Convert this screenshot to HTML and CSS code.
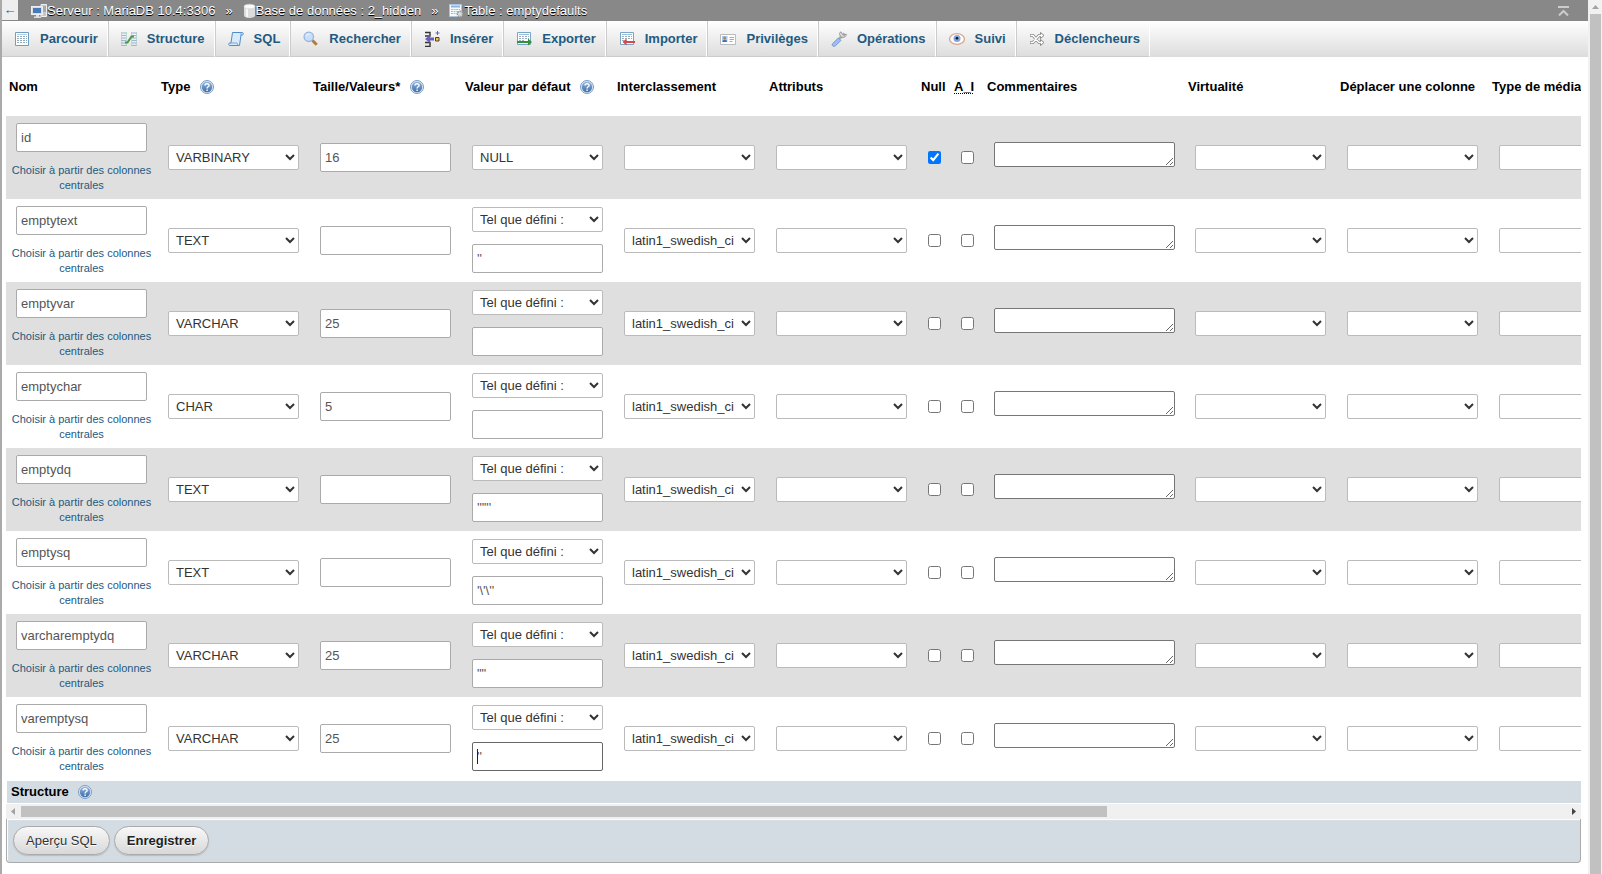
FILE: index.html
```html
<!DOCTYPE html>
<html lang="fr">
<head>
<meta charset="utf-8">
<title>Table : emptydefaults</title>
<link rel="stylesheet" href="styles.css">
</head>
<body>
<svg class="defs" aria-hidden="true">
  <defs>
    <linearGradient id="ball" x1="0" y1="0" x2="0" y2="1"><stop offset="0" stop-color="#8fb4de"/><stop offset="1" stop-color="#3f6ea8"/></linearGradient>
    <symbol id="help" viewBox="0 0 14 14">
      <circle cx="7" cy="7" r="6.5" fill="#dfe8f3" stroke="#7b9cc4"/>
      <circle cx="7" cy="7" r="5.2" fill="url(#ball)"/>
      <path d="M5 5.6C5 3.2 9.1 3.2 9.1 5.4 9.1 6.9 7.1 6.7 7.1 8.4M7.1 9.6v1.3" fill="none" stroke="#fff" stroke-width="1.4"/>
    </symbol>
  </defs>
</svg>
<div class="app">
  <div class="page">
    <header class="topbar">
      <button class="collapse" type="button" aria-label="Masquer le panneau">←</button>
      <nav class="crumbs" aria-label="Fil d'Ariane">
        <a href="#"><svg viewBox="0 0 16 16"><path d="M10 1.500h5.500v12H10z" fill="#c8c8c8" stroke="#eee"/><path d="M11 4h4M11 6h4M11 8h4" stroke="#888"/><rect x=".5" y="3.500" width="11" height="8" fill="#ddd" stroke="#eee"/><path d="M2 5h8v5H2z" fill="#4779bd"/><path d="M5 12h3v1.500h2V15H3v-1.500h2z" fill="#ddd"/></svg>Serveur : MariaDB 10.4:3306</a>
        <span class="sep">»</span>
        <a href="#"><svg class="db" viewBox="0 0 13 16"><path d="M1 3.500v9c0 3.300 11 3.300 11 0v-9z" fill="#dcdcdc"/><path d="M3 4v9.700l2 .7V4z" fill="#f7f7f7"/><ellipse cx="6.500" cy="3.500" rx="5.500" ry="2.300" fill="#fafafa" stroke="#ccc" stroke-width=".6"/></svg>Base de données : 2_hidden</a>
        <span class="sep">»</span>
        <a href="#"><svg viewBox="0 0 16 16"><path d="M1.500 1.500h12v12h-12z" fill="#f4f9fd" stroke="#a9c4dc"/><path d="M3 3.500h9" stroke="#8db4d6" stroke-width="2"/><path d="M3 6.500h9M3 8.500h9M3 10.500h9" stroke="#a9bccb" stroke-dasharray="2 .6"/><circle cx="12" cy="11" r="2.600" fill="#ddd" stroke="#999" stroke-width="1.600" stroke-dasharray="1.500 .8"/></svg>Table : emptydefaults</a>
      </nav>
      <a class="totop" href="#" aria-label="Haut de page"><svg viewBox="0 0 11 10"><path d="M0 1h11M1 9.500l4.500-4.500L10 9.500" fill="none" stroke="#ccc" stroke-width="2"/></svg></a>
    </header>
    <nav class="tabs" aria-label="Onglets">
      <a href="#"><svg viewBox="0 0 16 16"><path d="M1.500 1.500h13v13h-13z" fill="#fff" stroke="#6f9dc4"/><path d="M3 3.500h10" stroke="#b4d0e6"/><path d="M3 5.500h10M3 7.500h10M3 9.500h10M3 11.500h10" stroke="#8fa9bd" stroke-dasharray="2 1"/></svg>Parcourir</a>
      <a href="#"><svg viewBox="0 0 16 16"><path d="M0 2h6M0 4.500h5M0 7h5M0 9.500h5M0 12h5M0 14.500h6M10 2h6M11 4.500h5M11 7h5M11 9.500h5M11 12h5M10 14.500h6" stroke="#9bb7cf"/><path d="M.5 1v14M5.500 1v14M10.500 1v14M15.500 1v14" stroke="#a9d0cf" stroke-width=".7"/><path d="M4 11.500h2.500l4-6H13" fill="none" stroke="#4a9a48" stroke-width="2"/></svg>Structure</a>
      <a href="#"><svg viewBox="0 0 16 16"><path d="M4.500 1.500h10c1 0 1 2.500 0 2.500H13l-1.500 10.500h-10c-1 0-1-2 0-2.500H3z" fill="#d9eafb" stroke="#4f8ccb"/><path d="M13 4V1.500M1.500 12H9l1 2.500" fill="none" stroke="#76a7da"/></svg>SQL</a>
      <a href="#"><svg viewBox="0 0 16 16"><path d="M9.500 9.500l4.200 4.200" stroke="#b87a35" stroke-width="3"/><path d="M8.500 8.500l1.500 1.500" stroke="#888" stroke-width="1.500"/><circle cx="5.800" cy="5.800" r="4.700" fill="#c6e0fb" stroke="#9cb5d8" stroke-width="1.300"/><path d="M3.500 5c.4-1.300 1.500-2 3-2" fill="none" stroke="#fff"/></svg>Rechercher</a>
      <a href="#"><svg viewBox="0 0 16 16"><path d="M1 1.500h5V5H1M1 11.500h5v4H1" fill="none" stroke="#333" stroke-width="1.400"/><path d="M1 8l5-4v2.500h4v3H6V12z" fill="#6a5fc0"/><path d="M11.500 6.500h3.500v3.500h-3.500z" fill="#f4c33c" stroke="#444"/><path d="M13.500 0v4M11.500 2h4" stroke="#6a5fc0"/></svg>Insérer</a>
      <a href="#"><svg viewBox="0 0 16 16"><path d="M1.500 1.500h13v12h-13z" fill="#fff" stroke="#7ba5c7"/><path d="M3 3.500h10" stroke="#9bc0de"/><path d="M3 5.500h10M3 7.500h10M3 9.500h5" stroke="#9bb0bf" stroke-dasharray="2 1"/><path d="M1 10h11V7.500l4 3.500-4 3.500V12H1z" fill="#32923a"/></svg>Exporter</a>
      <a href="#"><svg viewBox="0 0 16 16"><path d="M1.500 1.500h13v12h-13z" fill="#fff" stroke="#7ba5c7"/><path d="M3 3.500h10" stroke="#9bc0de"/><path d="M3 5.500h10M3 7.500h10M3 9.500h5" stroke="#9bb0bf" stroke-dasharray="2 1"/><path d="M16 10H7.500V7.500L3.500 11l4 3.500V12H16z" fill="#d9474b"/></svg>Importer</a>
      <a href="#"><svg viewBox="0 0 16 16"><path d="M.5 3.500h15v10H.5z" fill="#fff" stroke="#bbb"/><path d="M2 5h5.500v6H2z" fill="#a9cbea"/><circle cx="4.700" cy="7" r="1.500" fill="#b78255"/><path d="M2.500 11c0-3 4.500-3 4.500 0z" fill="#3d75b3"/><path d="M9.500 6.500h4.500M9.500 8.500h4.500M9.500 10.500h3" stroke="#aaa"/></svg>Privilèges</a>
      <a href="#"><svg viewBox="0 0 16 16"><path d="M8 8l5.500-5.500" stroke="#aaa" stroke-width="2.600"/><path d="M10 .8c-2.500 1-1.500 4.500 1 5.400 2.500.7 4.500-.8 4.200-3.200l-2.500 1.500-1.800-1.800z" fill="#ddd" stroke="#888" stroke-width=".8"/><path d="M1.800 12.500L7.300 7l2.500 2.500-5.300 5.300c-2 1.600-4.400-.5-2.700-2.300z" fill="#9cc0f3" stroke="#6b96d8"/></svg>Opérations</a>
      <a href="#"><svg viewBox="0 0 16 16"><ellipse cx="8" cy="8" rx="7.400" ry="5.300" fill="#fff" stroke="#d9a58a" stroke-width="1.300"/><circle cx="8" cy="7.500" r="3.500" fill="#7fa6e0"/><circle cx="8" cy="7.200" r="1.300" fill="#111"/></svg>Suivi</a>
      <a href="#"><svg viewBox="0 0 16 16"><path d="M1 4.500h3l6 7h3M1 11.500h3l6-7h3" fill="none" stroke="#888" stroke-width="3"/><path d="M11.500 1.500l3.500 3-3.500 3zM11.500 8.500l3.500 3-3.500 3z" fill="#fff" stroke="#888"/><path d="M1.500 4.500H4l6 7h3M1.500 11.500H4l6-7h3" fill="none" stroke="#fff" stroke-width="1.400"/></svg>Déclencheurs</a>
    </nav>
    <main>
      <div class="scroller">
        <table>
          <colgroup><col class="wide"><col class="wide"><col class="wide"><col class="wide"><col class="wide"><col class="wide"><col class="tick"><col class="tick"><col class="note"><col class="wide"><col class="wide"><col class="wide"></colgroup>
          <thead><tr>
            <th>Nom</th>
            <th>Type <svg class="help"><use href="#help"/></svg></th>
            <th>Taille/Valeurs* <svg class="help"><use href="#help"/></svg></th>
            <th>Valeur par défaut <svg class="help"><use href="#help"/></svg></th>
            <th>Interclassement</th><th>Attributs</th><th>Null</th>
            <th><abbr title="AUTO_INCREMENT">A_I</abbr></th>
            <th>Commentaires</th><th>Virtualité</th><th>Déplacer une colonne</th><th>Type de média</th>
          </tr></thead>
          <tbody>
            <tr>
              <td class="name"><input type="text" aria-label="Nom" value="id"><a href="#">Choisir à partir des colonnes centrales</a></td>
              <td><select aria-label="Type"><option>VARBINARY</option></select></td>
              <td><input type="text" aria-label="Taille" value="16"></td>
              <td><select aria-label="Valeur par défaut"><option>NULL</option></select></td>
              <td><select aria-label="Interclassement"><option></option></select></td>
              <td><select aria-label="Attributs"><option></option></select></td>
              <td><input type="checkbox" aria-label="Null" checked></td>
              <td><input type="checkbox" aria-label="A_I"></td>
              <td><textarea aria-label="Commentaires"></textarea></td>
              <td><select aria-label="Virtualité"><option></option></select></td>
              <td><select aria-label="Déplacer"><option></option></select></td>
              <td><select aria-label="Type de média"><option></option></select></td>
            </tr>
            <tr>
              <td class="name"><input type="text" aria-label="Nom" value="emptytext"><a href="#">Choisir à partir des colonnes centrales</a></td>
              <td><select aria-label="Type"><option>TEXT</option></select></td>
              <td><input type="text" aria-label="Taille"></td>
              <td><div class="pair"><select aria-label="Valeur par défaut"><option>Tel que défini :</option></select><input type="text" aria-label="Valeur" value="''"></div></td>
              <td><select aria-label="Interclassement"><option>latin1_swedish_ci</option></select></td>
              <td><select aria-label="Attributs"><option></option></select></td>
              <td><input type="checkbox" aria-label="Null"></td>
              <td><input type="checkbox" aria-label="A_I"></td>
              <td><textarea aria-label="Commentaires"></textarea></td>
              <td><select aria-label="Virtualité"><option></option></select></td>
              <td><select aria-label="Déplacer"><option></option></select></td>
              <td><select aria-label="Type de média"><option></option></select></td>
            </tr>
            <tr>
              <td class="name"><input type="text" aria-label="Nom" value="emptyvar"><a href="#">Choisir à partir des colonnes centrales</a></td>
              <td><select aria-label="Type"><option>VARCHAR</option></select></td>
              <td><input type="text" aria-label="Taille" value="25"></td>
              <td><div class="pair"><select aria-label="Valeur par défaut"><option>Tel que défini :</option></select><input type="text" aria-label="Valeur"></div></td>
              <td><select aria-label="Interclassement"><option>latin1_swedish_ci</option></select></td>
              <td><select aria-label="Attributs"><option></option></select></td>
              <td><input type="checkbox" aria-label="Null"></td>
              <td><input type="checkbox" aria-label="A_I"></td>
              <td><textarea aria-label="Commentaires"></textarea></td>
              <td><select aria-label="Virtualité"><option></option></select></td>
              <td><select aria-label="Déplacer"><option></option></select></td>
              <td><select aria-label="Type de média"><option></option></select></td>
            </tr>
            <tr>
              <td class="name"><input type="text" aria-label="Nom" value="emptychar"><a href="#">Choisir à partir des colonnes centrales</a></td>
              <td><select aria-label="Type"><option>CHAR</option></select></td>
              <td><input type="text" aria-label="Taille" value="5"></td>
              <td><div class="pair"><select aria-label="Valeur par défaut"><option>Tel que défini :</option></select><input type="text" aria-label="Valeur"></div></td>
              <td><select aria-label="Interclassement"><option>latin1_swedish_ci</option></select></td>
              <td><select aria-label="Attributs"><option></option></select></td>
              <td><input type="checkbox" aria-label="Null"></td>
              <td><input type="checkbox" aria-label="A_I"></td>
              <td><textarea aria-label="Commentaires"></textarea></td>
              <td><select aria-label="Virtualité"><option></option></select></td>
              <td><select aria-label="Déplacer"><option></option></select></td>
              <td><select aria-label="Type de média"><option></option></select></td>
            </tr>
            <tr>
              <td class="name"><input type="text" aria-label="Nom" value="emptydq"><a href="#">Choisir à partir des colonnes centrales</a></td>
              <td><select aria-label="Type"><option>TEXT</option></select></td>
              <td><input type="text" aria-label="Taille"></td>
              <td><div class="pair"><select aria-label="Valeur par défaut"><option>Tel que défini :</option></select><input type="text" aria-label="Valeur" value="'&quot;&quot;'"></div></td>
              <td><select aria-label="Interclassement"><option>latin1_swedish_ci</option></select></td>
              <td><select aria-label="Attributs"><option></option></select></td>
              <td><input type="checkbox" aria-label="Null"></td>
              <td><input type="checkbox" aria-label="A_I"></td>
              <td><textarea aria-label="Commentaires"></textarea></td>
              <td><select aria-label="Virtualité"><option></option></select></td>
              <td><select aria-label="Déplacer"><option></option></select></td>
              <td><select aria-label="Type de média"><option></option></select></td>
            </tr>
            <tr>
              <td class="name"><input type="text" aria-label="Nom" value="emptysq"><a href="#">Choisir à partir des colonnes centrales</a></td>
              <td><select aria-label="Type"><option>TEXT</option></select></td>
              <td><input type="text" aria-label="Taille"></td>
              <td><div class="pair"><select aria-label="Valeur par défaut"><option>Tel que défini :</option></select><input type="text" aria-label="Valeur" value="'\'\''"></div></td>
              <td><select aria-label="Interclassement"><option>latin1_swedish_ci</option></select></td>
              <td><select aria-label="Attributs"><option></option></select></td>
              <td><input type="checkbox" aria-label="Null"></td>
              <td><input type="checkbox" aria-label="A_I"></td>
              <td><textarea aria-label="Commentaires"></textarea></td>
              <td><select aria-label="Virtualité"><option></option></select></td>
              <td><select aria-label="Déplacer"><option></option></select></td>
              <td><select aria-label="Type de média"><option></option></select></td>
            </tr>
            <tr>
              <td class="name"><input type="text" aria-label="Nom" value="varcharemptydq"><a href="#">Choisir à partir des colonnes centrales</a></td>
              <td><select aria-label="Type"><option>VARCHAR</option></select></td>
              <td><input type="text" aria-label="Taille" value="25"></td>
              <td><div class="pair"><select aria-label="Valeur par défaut"><option>Tel que défini :</option></select><input type="text" aria-label="Valeur" value="&quot;&quot;"></div></td>
              <td><select aria-label="Interclassement"><option>latin1_swedish_ci</option></select></td>
              <td><select aria-label="Attributs"><option></option></select></td>
              <td><input type="checkbox" aria-label="Null"></td>
              <td><input type="checkbox" aria-label="A_I"></td>
              <td><textarea aria-label="Commentaires"></textarea></td>
              <td><select aria-label="Virtualité"><option></option></select></td>
              <td><select aria-label="Déplacer"><option></option></select></td>
              <td><select aria-label="Type de média"><option></option></select></td>
            </tr>
            <tr>
              <td class="name"><input type="text" aria-label="Nom" value="varemptysq"><a href="#">Choisir à partir des colonnes centrales</a></td>
              <td><select aria-label="Type"><option>VARCHAR</option></select></td>
              <td><input type="text" aria-label="Taille" value="25"></td>
              <td><div class="pair active"><select aria-label="Valeur par défaut"><option>Tel que défini :</option></select><input type="text" aria-label="Valeur" value="''"></div></td>
              <td><select aria-label="Interclassement"><option>latin1_swedish_ci</option></select></td>
              <td><select aria-label="Attributs"><option></option></select></td>
              <td><input type="checkbox" aria-label="Null"></td>
              <td><input type="checkbox" aria-label="A_I"></td>
              <td><textarea aria-label="Commentaires"></textarea></td>
              <td><select aria-label="Virtualité"><option></option></select></td>
              <td><select aria-label="Déplacer"><option></option></select></td>
              <td><select aria-label="Type de média"><option></option></select></td>
            </tr>
          </tbody>
        </table>
      </div>
      <div class="caption">Structure <svg class="help"><use href="#help"/></svg></div>
      <div class="hbar" aria-hidden="true">
        <svg viewBox="0 0 15 15"><path d="M9 4v7L5 7.500z" fill="#a3a3a3"/></svg>
        <div class="track"><div class="thumb"></div></div>
        <svg viewBox="0 0 15 15"><path d="M6 4v7l4-3.500z" fill="#444"/></svg>
      </div>
      <div class="actions">
        <button type="button">Aperçu SQL</button>
        <button type="submit" class="strong">Enregistrer</button>
      </div>
    </main>
  </div>
  <div class="vbar" aria-hidden="true">
    <svg viewBox="0 0 14 14"><path d="M4 9h7L7.500 5z" fill="#a3a3a3"/></svg>
    <div class="thumb"></div>
  </div>
</div>
</body>
</html>
```
FILE: styles.css
```css
* { box-sizing: border-box; }
body {
  margin: 0;
  font: 13px/15px "Liberation Sans", Arial, sans-serif;
  color: #000;
  background: #fff;
}
a { color: #235a81; text-decoration: none; }
.defs { position: absolute; width: 0; height: 0; }

.app {
  display: flex;
  min-height: 100vh;
  border-left: 2px solid #aaa;
}
.page { flex: 1; min-width: 0; }

.topbar {
  display: flex;
  align-items: center;
  height: 21px;
  padding-right: 19px;
  background: #888;
}
.collapse {
  width: 16px;
  height: 20px;
  margin-bottom: 1px;
  padding: 0;
  border: 0;
  background: #eee;
  color: #555;
  font: 13px/20px "Liberation Sans", Arial, sans-serif;
}
.crumbs {
  display: flex;
  flex: 1;
  align-items: center;
  margin-left: 13px;
  white-space: nowrap;
}
.crumbs a, .sep { color: #fff; text-shadow: 0 1px 0 #000; }
.crumbs a { display: flex; align-items: center; }
.crumbs svg { width: 16px; height: 16px; }
.crumbs .db { width: 13px; }
.sep { margin: 0 10px; }
.totop svg { display: block; width: 11px; height: 10px; }

.tabs {
  display: flex;
  height: 36px;
  background: linear-gradient(#fff, #dcdcdc);
}
.tabs a {
  display: flex;
  align-items: center;
  gap: 10px;
  padding: 0 9px 0 12px;
  border-right: 1px solid #fff;
  border-bottom: 1px solid #ccc;
  font-weight: bold;
  white-space: nowrap;
}
.tabs a + a { border-left: 1px solid #ccc; }
.tabs svg { width: 16px; height: 16px; }

main { padding: 0 7px 0 4px; }
.scroller { overflow: hidden; }
table {
  width: 1635px;
  table-layout: fixed;
  border-collapse: collapse;
}
.wide { width: 152px; }
.tick { width: 33px; }
.note { width: 201px; }
th {
  height: 59px;
  padding: 0 0 0 3px;
  text-align: left;
  white-space: nowrap;
}
.help {
  width: 14px;
  height: 14px;
  margin-left: 6px;
  vertical-align: -3px;
}
abbr { text-decoration: underline dotted 1px; text-underline-offset: 2px; }
td {
  height: 83px;
  padding: 0 11px 0 10px;
  text-align: center;
  vertical-align: middle;
}
tbody tr:nth-child(odd) { background: #dfdfdf; }
td.name { padding: 0 3px 0 2px; }
.name a {
  display: block;
  margin-top: 11px;
  font-size: 11px;
}
td input[type="text"], td select {
  display: block;
  width: 131px;
  margin: 0 auto;
  border: 1px solid #aaa;
  border-radius: 2px;
  background: #fff;
  font: 13px/15px "Liberation Sans", Arial, sans-serif;
}
td input[type="text"] {
  height: 29px;
  padding: 0 4px;
  color: #555;
  outline: 0;
}
td select {
  height: 25px;
  padding: 0 3px;
  border-color: #bbb;
  color: #333;
}
td input[type="checkbox"] {
  display: block;
  width: 13px;
  height: 13px;
  margin: 0 auto;
}
textarea {
  display: block;
  width: 181px;
  height: 25px;
  margin: 0 auto 6px;
  border: 1px solid #767676;
  border-radius: 2px;
}
.pair {
  position: relative;
  display: grid;
  gap: 12px;
  margin-bottom: 2px;
}
.pair.active input[type="text"] { border-color: #666; }
.pair.active::after {
  content: "";
  position: absolute;
  left: 5px;
  bottom: 7px;
  width: 1px;
  height: 15px;
  background: #222;
}

.caption {
  height: 22px;
  margin: 1px 0 1px 1px;
  padding-left: 4px;
  background: #d3dce3;
  font-weight: bold;
  line-height: 22px;
}
.hbar {
  display: flex;
  height: 15px;
  background: #f0f0f0;
}
.hbar svg { width: 15px; height: 15px; }
.track { flex: 1; padding: 2px 0; }
.track .thumb { width: 70.3%; height: 11px; background: #c1c1c1; }
.actions {
  display: flex;
  gap: 4px;
  padding: 7px 6px;
  border: 1px solid #aaa;
  border-top: 0;
  border-radius: 0 0 4px 4px;
  background: #d3dce3;
  box-shadow: inset 1px 1px 1px #fff;
}
.actions button {
  height: 29px;
  padding: 0 12px;
  border: 1px solid #aaa;
  border-radius: 15px;
  background: linear-gradient(#f8f8f8, #d8d8d8);
  box-shadow: 0 1px 1px #bbb;
  color: #333;
  font: 13px/15px "Liberation Sans", Arial, sans-serif;
  text-shadow: 0 1px 0 #fff;
}
.actions .strong { color: #222; font-weight: bold; }

.vbar {
  display: flex;
  flex-direction: column;
  width: 14px;
  padding: 0 1px 0 0;
  background: #f1f1f1;
}
.vbar svg { width: 14px; height: 14px; }
.vbar .thumb { flex: 1; margin-left: 2px; background: #c1c1c1; }
```
